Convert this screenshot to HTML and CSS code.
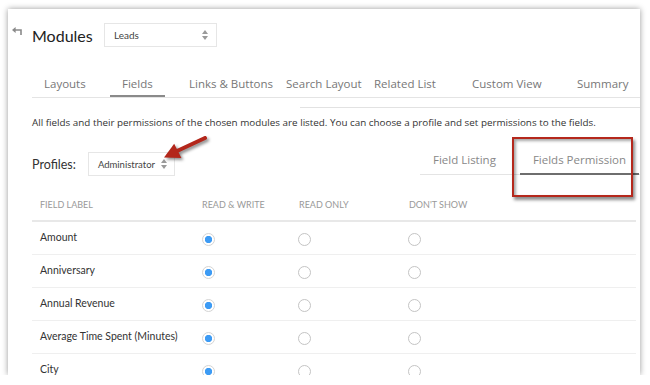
FILE: index.html
```html
<!DOCTYPE html>
<html lang="en">
<head>
    <meta charset="UTF-8">
    <meta name="viewport" content="width=device-width, initial-scale=1.0">
    <title>Modules - Fields Permission</title>
    <link rel="stylesheet" href="styles.css">
</head>
<body>
    <div class="window">
        <header class="header">
            <svg class="back" width="10" height="8" viewBox="0 0 10 8">
                <path d="M9 8V3H3" fill="none" stroke="#8a8a8a" stroke-width="1.6"/>
                <path d="M0 3L3.6 0V6Z" fill="#8a8a8a"/>
            </svg>
            <h1 class="title">Modules</h1>
            <div class="select select-leads">
                <span>Leads</span>
                <svg class="spin" width="6" height="10" viewBox="0 0 6 10"><path d="M3 0L6 4H0Z M3 10L6 6H0Z" fill="#9a9a9a"/></svg>
            </div>
        </header>

        <nav class="tabs">
            <div class="tab-cell"><span class="tab">Layouts</span></div>
            <div class="tab-cell"><span class="tab tab-active">Fields</span></div>
            <div class="tab-cell"><span class="tab">Links &amp; Buttons</span></div>
            <div class="tab-cell"><span class="tab">Search Layout</span></div>
            <div class="tab-cell"><span class="tab">Related List</span></div>
            <div class="tab-cell"><span class="tab">Custom View</span></div>
            <div class="tab-cell"><span class="tab">Summary</span></div>
        </nav>
        <div class="stray-line"></div>

        <p class="desc">All fields and their permissions of the chosen modules are listed. You can choose a profile and set permissions to the fields.</p>

        <div class="profile-row">
            <div class="profile-pick">
                <span class="profile-label">Profiles:</span>
                <div class="select select-profile">
                    <span>Administrator</span>
                    <svg class="spin" width="6" height="10" viewBox="0 0 6 10"><path d="M3 0L6 4H0Z M3 10L6 6H0Z" fill="#9a9a9a"/></svg>
                </div>
            </div>
            <div class="subtabs">
                <span class="subtab">Field Listing</span>
                <span class="subtab subtab-active">Fields Permission</span>
            </div>
        </div>

        <div class="table">
            <div class="row row-head">
                <div class="cell cell-label">Field Label</div>
                <div class="cell cell-rw">Read &amp; Write</div>
                <div class="cell cell-ro">Read Only</div>
                <div class="cell cell-ds">Don't Show</div>
            </div>
            <div class="row">
                <div class="cell cell-label">Amount</div>
                <div class="cell cell-rw"><span class="radio radio-on"></span></div>
                <div class="cell cell-ro"><span class="radio"></span></div>
                <div class="cell cell-ds"><span class="radio"></span></div>
            </div>
            <div class="row">
                <div class="cell cell-label">Anniversary</div>
                <div class="cell cell-rw"><span class="radio radio-on"></span></div>
                <div class="cell cell-ro"><span class="radio"></span></div>
                <div class="cell cell-ds"><span class="radio"></span></div>
            </div>
            <div class="row">
                <div class="cell cell-label">Annual Revenue</div>
                <div class="cell cell-rw"><span class="radio radio-on"></span></div>
                <div class="cell cell-ro"><span class="radio"></span></div>
                <div class="cell cell-ds"><span class="radio"></span></div>
            </div>
            <div class="row">
                <div class="cell cell-label">Average Time Spent (Minutes)</div>
                <div class="cell cell-rw"><span class="radio radio-on"></span></div>
                <div class="cell cell-ro"><span class="radio"></span></div>
                <div class="cell cell-ds"><span class="radio"></span></div>
            </div>
            <div class="row">
                <div class="cell cell-label">City</div>
                <div class="cell cell-rw"><span class="radio radio-on"></span></div>
                <div class="cell cell-ro"><span class="radio"></span></div>
                <div class="cell cell-ds"><span class="radio"></span></div>
            </div>
        </div>

        <!-- annotations drawn over the screenshot -->
        <svg class="callout-arrow" width="60" height="40" viewBox="0 0 60 40">
            <line x1="47" y1="9" x2="18" y2="22.5" stroke="#b3271b" stroke-width="4" stroke-linecap="round"/>
            <path d="M6 28.5L16.2 14.8L23.4 29Z" fill="#b3271b"/>
        </svg>
        <div class="callout-box"></div>
    </div>
</body>
</html>
```

FILE: styles.css
```css
body {
    margin: 0;
    background: #fff;
    font-family: "Open Sans", "Liberation Sans", sans-serif;
}
.window {
    position: relative;
    margin: 9px 0 0 8px;
    width: 632px;
    height: 366px;
    overflow: hidden;
    background: #fff;
    box-shadow: 0 0 6px rgba(0, 0, 0, 0.4);
}

/* header */
.header {
    display: flex;
    align-items: center;
    padding-top: 14px;
    height: 24px;
}
.back {
    margin-left: 4px;
    margin-top: -9px;
}
.title {
    margin: 0 0 0 10px;
    width: 59px;
    font-family: Lato, "Liberation Sans", sans-serif;
    font-weight: 400;
    font-size: 16px;
    color: #222;
    white-space: nowrap;
}
.select {
    display: flex;
    align-items: center;
    justify-content: space-between;
    box-sizing: border-box;
    height: 24px;
    border: 1px solid #e6e6e6;
    font-family: Lato, "Liberation Sans", sans-serif;
    font-size: 10px;
    color: #444;
}
.select-leads {
    width: 113px;
    margin-left: 13px;
    padding: 0 8px 0 9px;
}
.select-profile {
    width: 87px;
    margin-left: 12px;
    padding: 0 7px 0 9px;
    font-size: 9.5px;
}

/* module tabs */
.tabs {
    display: grid;
    grid-template-columns: 78px 67px 97px 88px 98px 105px 1fr;
    margin: 24px 0 0 24px;
    border-bottom: 1px solid #e4e4e4;
}
.tab-cell {
    height: 26px;
}
.tab {
    display: inline-block;
    box-sizing: border-box;
    height: 26px;
    line-height: 26px;
    padding: 0 12px;
    font-size: 11.5px;
    color: #777;
    white-space: nowrap;
}
.tab-active {
    border-bottom: 2px solid #8a8a8a;
}
.stray-line {
    height: 1px;
    margin: 9px 0 0 292px;
    background: #e2e2e2;
}

.desc {
    margin: 7px 0 0 24px;
    font-size: 9.85px;
    line-height: 14px;
    color: #333;
    white-space: nowrap;
}

/* profile + sub tabs */
.profile-row {
    display: flex;
    align-items: flex-start;
    justify-content: space-between;
    margin-top: 18px;
}
.profile-pick {
    display: flex;
    align-items: center;
    margin: 5px 0 0 24px;
}
.profile-label {
    font-family: Lato, "Liberation Sans", sans-serif;
    font-size: 12.5px;
    color: #333;
}
.subtabs {
    display: flex;
    gap: 11px;
    width: 220px;
    box-sizing: border-box;
    padding-right: 5px;
    border-bottom: 1px solid #e4e4e4;
}
.subtab {
    box-sizing: border-box;
    height: 27px;
    line-height: 26px;
    padding: 0 13px;
    font-size: 11.5px;
    color: #888;
    white-space: nowrap;
}
.subtab-active {
    border-bottom: 2px solid #6e6e6e;
    margin-left: auto;
    height: 28px;
    margin-bottom: -1px;
}

/* permission table */
.table {
    margin: 15px 4px 0 24px;
    font-family: Lato, "Liberation Sans", sans-serif;
}
.row {
    display: grid;
    grid-template-columns: 170px 97px 110px 1fr;
    align-items: center;
    height: 33px;
    box-sizing: border-box;
    border-bottom: 1px solid #efefef;
}
.row-head {
    height: 31px;
    border-bottom: 2px solid #e8e8e8;
}
.row-head .cell {
    font-size: 9px;
    text-transform: uppercase;
    color: #999;
}
.cell {
    font-size: 10.5px;
    color: #333;
    margin-top: -2px;
}
.cell-label {
    padding-left: 8px;
}
.radio {
    display: block;
    box-sizing: border-box;
    width: 13px;
    height: 13px;
    margin-top: 5px;
    border: 1px solid #c4c4c4;
    border-radius: 50%;
    background: #fff;
}
.cell-ro .radio,
.cell-ds .radio {
    margin-left: -1px;
}
.radio-on {
    border-color: #d4d4d4;
    background: radial-gradient(circle, #3d9bf4 0 3.4px, #fff 3.9px);
}

/* annotations */
.callout-arrow {
    position: absolute;
    left: 150px;
    top: 120px;
    filter: drop-shadow(2px 2px 1.5px rgba(0, 0, 0, 0.45));
}
.callout-box {
    position: absolute;
    left: 504px;
    top: 128px;
    width: 121px;
    height: 60px;
    box-sizing: border-box;
    border: 2px solid #b5281c;
    box-shadow: 2px 3px 3px rgba(0, 0, 0, 0.45), inset 2px 2px 3px rgba(0, 0, 0, 0.35);
}
```
